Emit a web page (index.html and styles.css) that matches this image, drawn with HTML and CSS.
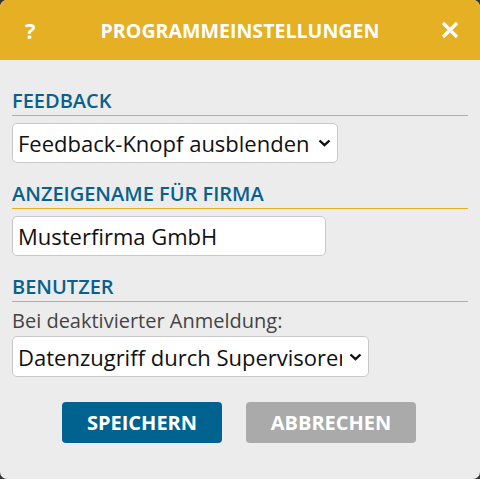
FILE: index.html
```html
<!DOCTYPE html>
<html lang="de">
<head>
    <meta charset="UTF-8">
    <meta name="viewport" content="width=device-width, initial-scale=1.0">
    <title>Programmeinstellungen</title>
    <link rel="stylesheet" href="styles.css">
</head>
<body>

    <div class="dialog">
        <div class="dialog-header">
            <span class="help">?</span>
            <h2>PROGRAMMEINSTELLUNGEN</h2>
            <span class="close">
                <svg width="18" height="18" viewBox="0 0 18 18">
                    <path d="M2 2 L16 16 M16 2 L2 16" stroke="#fff" stroke-width="3.2" stroke-linecap="butt"/>
                </svg>
            </span>
        </div>

        <div class="dialog-body">
            <h3 class="section first">FEEDBACK</h3>
            <div class="select-wrap field-feedback">
                <select id="feedback" class="field">
                    <option selected>Feedback-Knopf ausblenden</option>
                    <option>Feedback-Knopf anzeigen</option>
                </select>
                <svg class="chevron" width="13" height="8" viewBox="0 0 13 8">
                    <path d="M1.5 1.5 L6.5 6.2 L11.5 1.5" fill="none" stroke="#111" stroke-width="2.4"/>
                </svg>
            </div>

            <h3 class="section">ANZEIGENAME FÜR FIRMA</h3>
            <input type="text" id="firma" class="field field-name" value="Musterfirma GmbH">

            <h3 class="section">BENUTZER</h3>
            <label for="anmeldung" class="hint">Bei deaktivierter Anmeldung:</label>
            <div class="select-wrap field-user">
                <select id="anmeldung" class="field">
                    <option selected>Datenzugriff durch Supervisoren</option>
                    <option>Kein Datenzugriff</option>
                </select>
                <svg class="chevron" width="13" height="8" viewBox="0 0 13 8">
                    <path d="M1.5 1.5 L6.5 6.2 L11.5 1.5" fill="none" stroke="#111" stroke-width="2.4"/>
                </svg>
            </div>

            <div class="actions">
                <button class="btn btn-save">SPEICHERN</button>
                <button class="btn btn-cancel">ABBRECHEN</button>
            </div>
        </div>
    </div>

</body>
</html>
```

FILE: styles.css
```css
html, body {
    margin: 0;
    height: 100%;
}
body {
    font-family: "Open Sans", "Liberation Sans", sans-serif;
    background-color: #333;
}
.dialog {
    height: 100%;
    background-color: #ececec;
    border-radius: 7px;
    overflow: hidden;
}
.dialog-header {
    height: 60px;
    background-color: #e5b024;
    color: white;
    display: flex;
    align-items: center;
    justify-content: space-between;
    padding: 0 21px 0 25px;
}
.dialog-header h2 {
    margin: 0;
    font-size: 19.6px;
    font-weight: 700;
}
.help {
    font-size: 22px;
    font-weight: 700;
    width: 14px;
}
.close {
    display: flex;
    width: 18px;
}
.dialog-body {
    padding: 0 12px;
}
.section {
    margin: 17px 0 7px;
    padding-bottom: 1px;
    font-size: 20px;
    line-height: 27px;
    font-weight: 600;
    color: #08618c;
    border-bottom: 1px solid #e5ae1f;
}
.section.first {
    margin-top: 27px;
}
.field {
    display: block;
    width: 100%;
    height: 40px;
    font-family: "Open Sans", "Liberation Sans", sans-serif;
    font-size: 22px;
    color: #111;
    background-color: white;
    border: 1px solid #c8c8c8;
    border-radius: 5px;
    padding: 0 5px;
    box-sizing: border-box;
}
select.field {
    appearance: none;
    -webkit-appearance: none;
    padding-right: 26px;
}
.select-wrap {
    position: relative;
}
.chevron {
    position: absolute;
    right: 7px;
    top: 50%;
    margin-top: -4px;
    pointer-events: none;
}
.field-feedback {
    width: 326px;
}
.field-name {
    width: 314px;
}
.field-user {
    width: 357px;
}
.field-user .field {
    height: 41px;
}
.hint {
    display: block;
    font-size: 20px;
    line-height: 24px;
    color: #444;
    margin-top: 5px;
    margin-bottom: 3px;
}
.actions {
    display: flex;
    gap: 24px;
    padding-left: 50px;
    margin-top: 25px;
}
.btn {
    height: 41px;
    border: none;
    border-radius: 4px;
    color: white;
    font-family: "Open Sans", "Liberation Sans", sans-serif;
    font-size: 20px;
    font-weight: 700;
    cursor: pointer;
}
.btn-save {
    width: 160px;
    background-color: #00628f;
}
.btn-cancel {
    width: 170px;
    background-color: #aaaaaa;
}
```
